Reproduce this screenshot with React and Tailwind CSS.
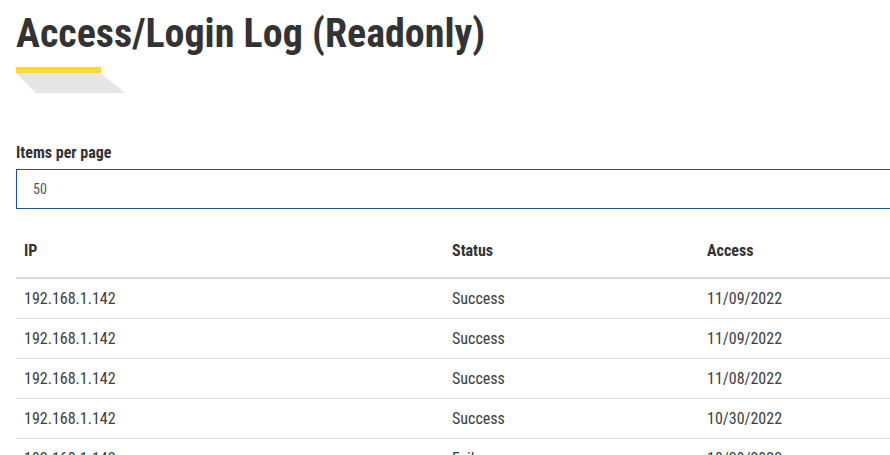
import React from 'react';

const rows = [
    { ip: '192.168.1.142', status: 'Success', access: '11/09/2022' },
    { ip: '192.168.1.142', status: 'Success', access: '11/09/2022' },
    { ip: '192.168.1.142', status: 'Success', access: '11/08/2022' },
    { ip: '192.168.1.142', status: 'Success', access: '10/30/2022' },
    { ip: '192.168.1.142', status: 'Fail', access: '10/29/2022' },
    { ip: '192.168.1.142', status: 'Success', access: '10/29/2022' },
];

const font = { fontFamily: '"Roboto Condensed", "Liberation Sans Narrow", Roboto, sans-serif' };

const App = () => {
    return (
        <div className="h-[455px] w-[890px] overflow-hidden bg-white text-[#333]" style={font}>
            <div className="w-[1200px] pl-4">
                {/* Heading */}
                <h1 className="pt-[10px] text-[40px] font-bold leading-[48px] text-[#333]">
                    Access/Login Log (Readonly)
                </h1>
                <svg width="110" height="27" viewBox="0 0 110 27" className="mt-[9px] block">
                    <polygon points="0,6 85,6 109,26 20,26" fill="#e6e6e6" />
                    <rect x="0" y="0" width="85" height="6" fill="#fdd835" />
                </svg>

                {/* Page size */}
                <div className="mt-[49px]">
                    <label className="block text-[16px] font-bold leading-[20px] text-[#333]">Items per page</label>
                    <div className="mt-[6px] flex h-[40px] items-center border border-[#1d5299] pl-4 text-[14px] text-[#555]">
                        50
                    </div>
                </div>

                {/* Log table */}
                <div className="mt-[20px] text-[16px]">
                    <div className="grid h-[50px] grid-cols-[428px_255px_1fr] items-start border-b-2 border-[#ddd] pl-2 pt-[10px] text-[16px] font-bold leading-[24px]">
                        <div>IP</div>
                        <div>Status</div>
                        <div>Access</div>
                    </div>
                    {rows.map((r, i) => (
                        <div key={i} className="grid h-[40px] grid-cols-[428px_255px_1fr] items-center border-b border-[#ddd] pl-2 text-[#3c3c3c]">
                            <div>{r.ip}</div>
                            <div>{r.status}</div>
                            <div>{r.access}</div>
                        </div>
                    ))}
                </div>
            </div>
        </div>
    );
};

export default App;
